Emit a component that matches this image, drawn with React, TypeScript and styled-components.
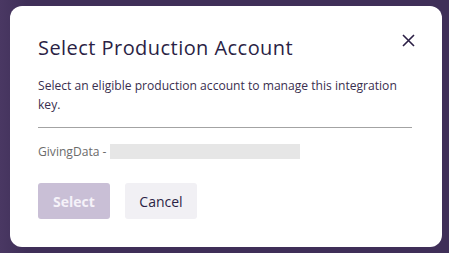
import styled, { createGlobalStyle } from "styled-components";

const Global = createGlobalStyle`
  html, body { margin: 0; padding: 0; }
  body {
    background: #3f2f58;
    font-family: "Open Sans", "Lato", sans-serif;
    width: 449px;
    height: 253px;
    overflow: hidden;
  }
`;

const Backdrop = styled.div`
  width: 449px;
  height: 253px;
  box-sizing: border-box;
  padding: 6px 7px 6px 10px;
  background: linear-gradient(90deg, #4a3863 0%, #3f2f58 6%, #3f2f58 100%);
`;

const Modal = styled.div`
  position: relative;
  height: 241px;
  background: #ffffff;
  border-radius: 12px;
  box-sizing: border-box;
  padding: 27px 30px 0 28px;
  display: flex;
  flex-direction: column;
`;

const Title = styled.h2`
  margin: 0;
  font-size: 20px;
  font-weight: 400;
  color: #2b1f45;
  line-height: 30px;
  letter-spacing: 0.45px;
`;

const CloseButton = styled.button`
  position: absolute;
  top: 24px;
  right: 24px;
  width: 20px;
  height: 20px;
  padding: 0;
  border: 0;
  background: transparent;
  display: flex;
  align-items: center;
  justify-content: center;
  cursor: pointer;
`;

const Description = styled.p`
  margin: 13px 0 0;
  font-size: 12.1px;
  line-height: 19px;
  color: #3a2f4f;
  max-width: 374px;
`;

const Divider = styled.hr`
  margin: 13px 0 0;
  border: 0;
  border-top: 1px solid #a3a3a3;
  width: 374px;
`;

const AccountRow = styled.div`
  margin-top: 14px;
  display: flex;
  align-items: center;
  gap: 4px;
  font-size: 12.1px;
  color: #6b6b6b;
  height: 18px;
`;

const Redacted = styled.span`
  display: inline-block;
  width: 190px;
  height: 15px;
  background: #e6e6e6;
`;

const Actions = styled.div`
  margin-top: 23px;
  display: flex;
  gap: 15px;
`;

const Button = styled.button<{ $primary?: boolean }>`
  width: 72px;
  height: 36px;
  border: 0;
  border-radius: 3px;
  font-family: "Open Sans", sans-serif;
  font-size: 14px;
  font-weight: ${(p) => (p.$primary ? 700 : 400)};
  background: ${(p) => (p.$primary ? "#c9bfd6" : "#f1f0f4")};
  color: ${(p) => (p.$primary ? "#f5f2f9" : "#2b1f45")};
  cursor: ${(p) => (p.$primary ? "default" : "pointer")};
`;

export default function App() {
  return (
    <>
      <Global />
      <Backdrop>
        <Modal>
          <Title>Select Production Account</Title>
          <CloseButton aria-label="Close">
            <svg width="13" height="13" viewBox="0 0 13 13">
              <path d="M1 1 L12 12 M12 1 L1 12" stroke="#2b1f45" strokeWidth="1.6" />
            </svg>
          </CloseButton>
          <Description>
            Select an eligible production account to manage this integration key.
          </Description>
          <Divider />
          <AccountRow>
            GivingData -<Redacted />
          </AccountRow>
          <Actions>
            <Button $primary disabled>Select</Button>
            <Button>Cancel</Button>
          </Actions>
        </Modal>
      </Backdrop>
    </>
  );
}
